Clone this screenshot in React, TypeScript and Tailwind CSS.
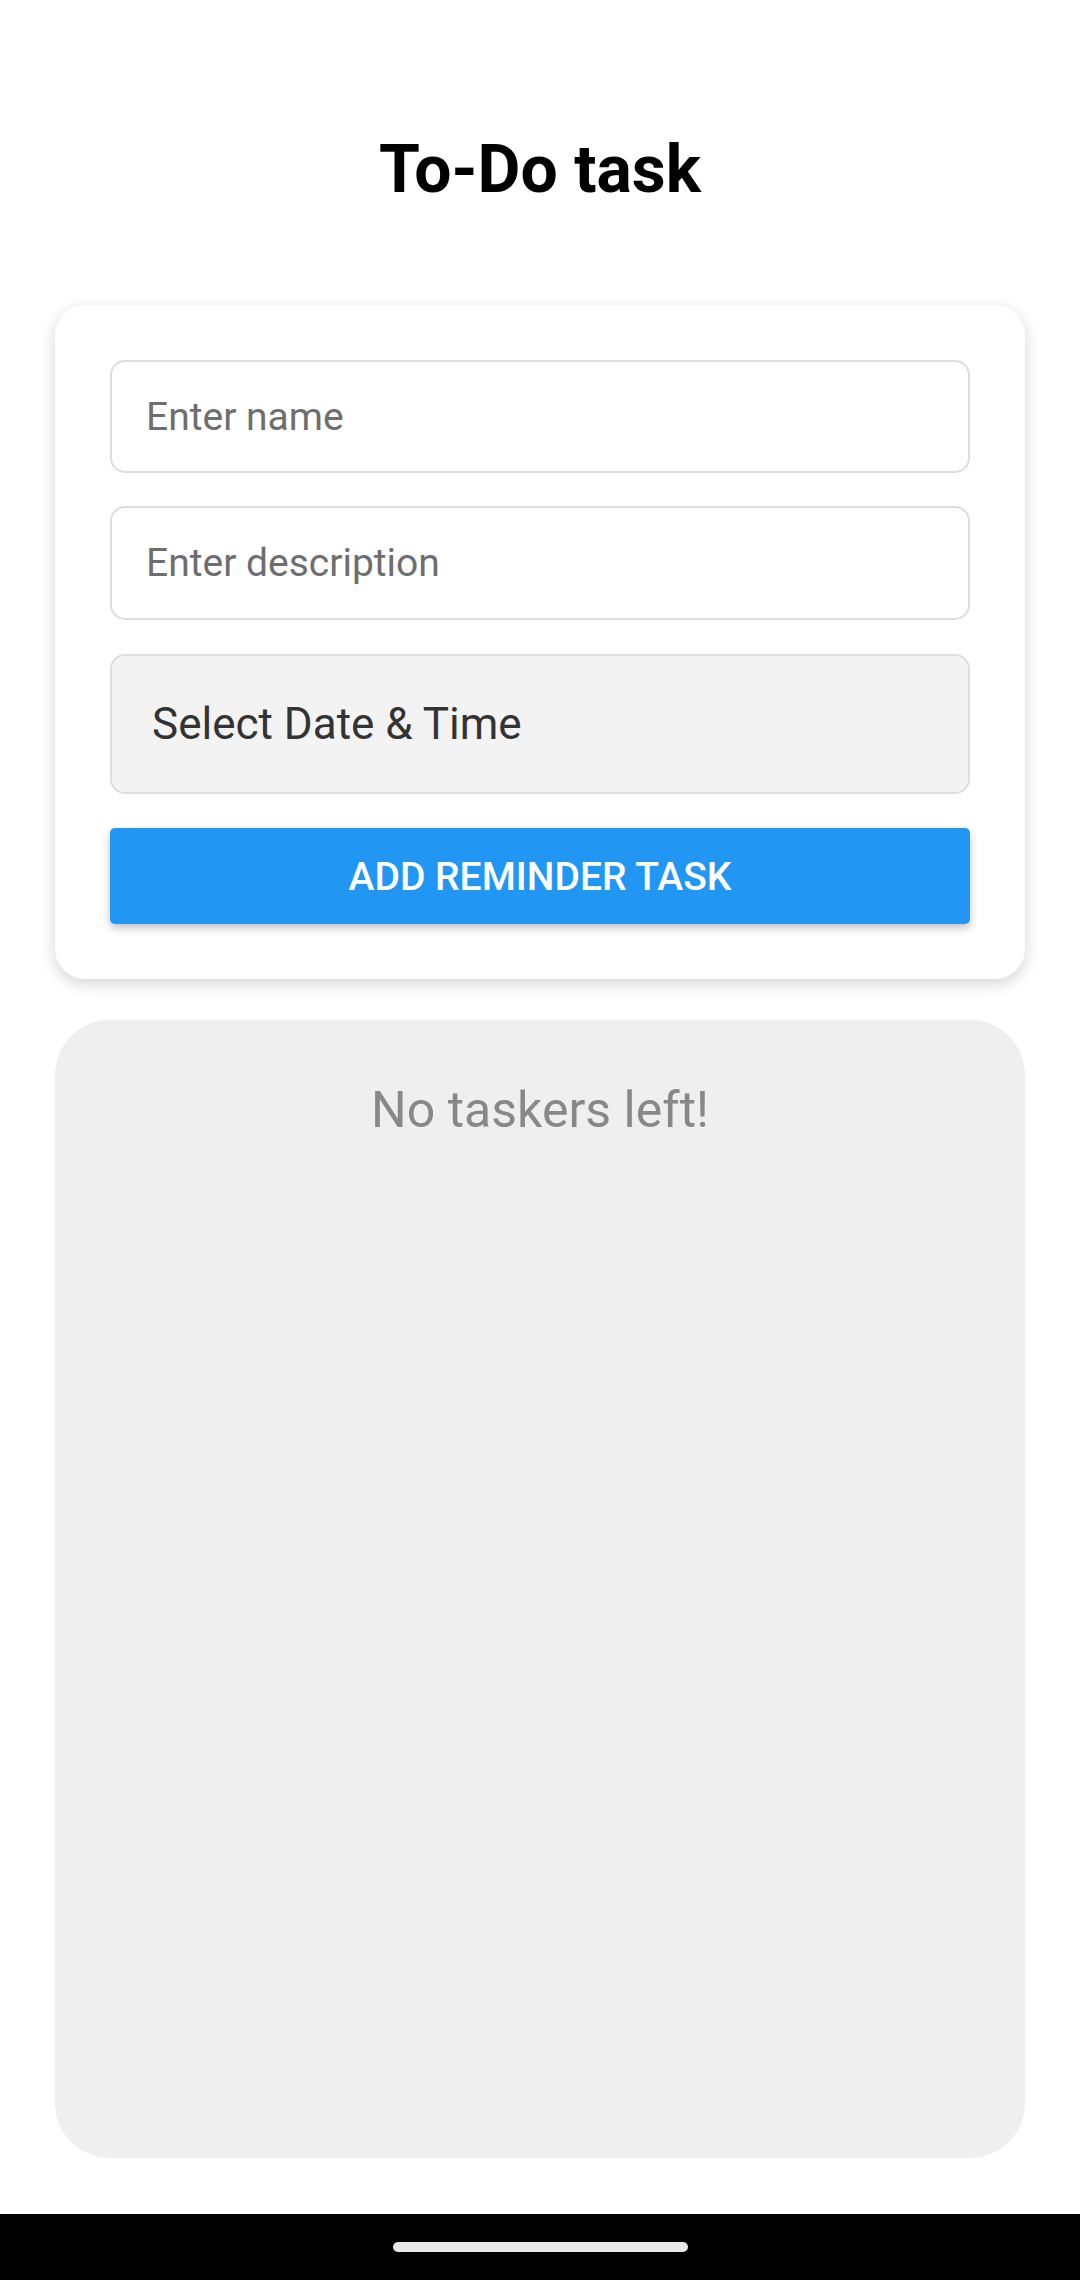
import React from 'react';

export default function App() {
  return (
    <div className="w-[1080px] h-[2280px] bg-white flex flex-col font-['Roboto',sans-serif] overflow-hidden">
      {/* Header */}
      <h1 className="pt-[131px] text-center text-[66px] leading-[77px] font-bold text-black">To-Do task</h1>

      {/* Form card */}
      <div className="mt-[97px] mx-[55px] bg-white rounded-[30px] shadow-[0_5px_16px_rgba(0,0,0,0.17)] px-[55px] pt-[55px] pb-[55px] flex flex-col">
        <input
          type="text"
          placeholder="Enter name"
          className="h-[113px] rounded-[15px] border-2 border-[#dddddd] bg-white px-[34px] text-[39px] text-[#333] placeholder:text-[#6e6e6e] outline-none"
        />
        <input
          type="text"
          placeholder="Enter description"
          className="mt-[33px] h-[114px] rounded-[15px] border-2 border-[#dddddd] bg-white px-[34px] text-[39px] text-[#333] placeholder:text-[#6e6e6e] outline-none"
        />
        <div className="mt-[34px] h-[140px] rounded-[15px] border-2 border-[#dddddd] bg-[#f3f3f3] px-[40px] flex items-center text-[44px] text-[#333333]">
          Select Date &amp; Time
        </div>
        <button className="mt-[34px] h-[96px] pt-[3px] rounded-[5px] bg-[#2196f3] text-white text-[39px] font-medium uppercase shadow-[0_4px_8px_rgba(0,0,0,0.24)]">
          Add Reminder Task
        </button>
      </div>

      {/* Task list */}
      <div className="mt-[41px] mx-[55px] h-[1138px] rounded-[55px] bg-[#efefef] pt-[62px] text-center">
        <p className="text-[50px] leading-[57px] text-[#888888]">No taskers left!</p>
      </div>

      <div className="flex-1" />

      {/* Navigation bar */}
      <div className="h-[66px] bg-black flex justify-center pt-[28px]">
        <div className="w-[295px] h-[10px] rounded-full bg-[#e8e8e8]" />
      </div>
    </div>
  );
}
